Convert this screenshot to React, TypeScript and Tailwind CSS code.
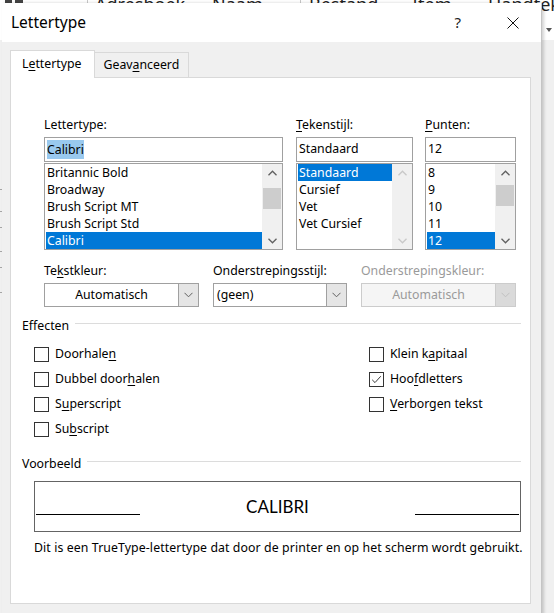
import type { ReactNode } from "react";

const FONTS = ["Britannic Bold", "Broadway", "Brush Script MT", "Brush Script Std", "Calibri"];
const STYLES = ["Standaard", "Cursief", "Vet", "Vet Cursief"];
const SIZES = ["8", "9", "10", "11", "12"];

// label with an underlined access key
function Acc({ text, at }: { text: string; at?: number }) {
  if (at === undefined) return <>{text}</>;
  return (
    <>
      {text.slice(0, at)}
      <span className="underline decoration-1 underline-offset-[2px]">{text[at]}</span>
      {text.slice(at + 1)}
    </>
  );
}

function Chevron({ dir, color, thin }: { dir: "up" | "down"; color: string; thin?: boolean }) {
  return (
    <svg width="9" height="6" viewBox="0 0 9 6" fill="none" stroke={color} strokeWidth={thin ? 1 : 1.3}>
      <polyline points={dir === "up" ? "0.5,5.2 4.5,1.2 8.5,5.2" : "0.5,0.8 4.5,4.8 8.5,0.8"} />
    </svg>
  );
}

function Field({ children }: { children: ReactNode }) {
  return <div className="flex h-[25px] items-center border border-[#a0a0a0] bg-white pl-[2px]">{children}</div>;
}

function ListBox({ items, selected, thumb, disabled }: { items: string[]; selected: number; thumb?: string; disabled?: boolean }) {
  const arrow = disabled ? "#c8c8c8" : "#606060";
  return (
    <div className="mt-px flex h-[87px] border border-[#a0a0a0] bg-white">
      <div className="flex-1 pl-px">
        {items.map((t, i) => (
          <div key={t} className={`h-[17px] pl-px pt-px leading-[16px] ${i === selected ? "bg-[#0078d7] text-white" : ""}`}>
            {t}
          </div>
        ))}
      </div>
      <div className="flex w-[20px] flex-col bg-[#f0f0f0]">
        <div className="grid h-[17px] place-items-center">
          <Chevron dir="up" color={arrow} />
        </div>
        <div className="flex-1">{thumb && <div className={`mx-px h-[21px] bg-[#cdcdcd] ${thumb}`} />}</div>
        <div className="grid h-[17px] place-items-center">
          <Chevron dir="down" color={arrow} />
        </div>
      </div>
    </div>
  );
}

function Combo({ value, width, center, disabled }: { value: string; width: string; center?: boolean; disabled?: boolean }) {
  return (
    <div className={`flex h-[24px] border ${width} ${disabled ? "border-[#cccccc] bg-[#f5f5f5] text-[#9a9a9a]" : "border-[#a0a0a0] bg-white"}`}>
      <div className={`flex flex-1 items-center ${center ? "justify-center" : "pl-[3px]"}`}>{value}</div>
      <div className={`grid w-[20px] place-items-center border-l ${disabled ? "border-[#cccccc] bg-[#dadada]" : "border-[#a0a0a0] bg-[#e5e5e5]"}`}>
        <Chevron dir="down" color={disabled ? "#c0c0c0" : "#606060"} thin />
      </div>
    </div>
  );
}

function Check({ text, at, checked }: { text: string; at: number; checked?: boolean }) {
  return (
    <div className="flex h-[25px] items-center pt-px">
      <div className="grid h-[15px] w-[15px] place-items-center border border-[#333333] bg-white">
        {checked && (
          <svg width="11" height="11" viewBox="0 0 11 11" fill="none" stroke="#3c3c3c" strokeWidth="1">
            <polyline points="1.2,5.8 4,8.6 9.8,2.2" />
          </svg>
        )}
      </div>
      <span className="ml-[6px]">
        <Acc text={text} at={at} />
      </span>
    </div>
  );
}

function Group({ title }: { title: string }) {
  return (
    <div className="flex h-[17px] items-center leading-[17px]">
      <span>{title}</span>
      <div className="ml-[6px] mr-[9px] h-px flex-1 -translate-y-[2px] bg-[#dcdcdc]" />
    </div>
  );
}

// row lines of the sheet peeking out on the left
const ROW_GAPS = ["h-[150px]", "h-[22px]", "h-[16px]", "h-[24px]", "h-[16px]", "h-[25px]"];

export default function App() {
  return (
    <div className="relative h-[613px] w-[554px] overflow-hidden bg-[#f0f0f0] font-['Noto_Sans',sans-serif] text-[12.3px] text-black">
      {/* spreadsheet behind the dialog */}
      <div className="flex h-[40px] items-start overflow-hidden bg-white text-[18px] leading-none text-[#222]">
        <div className="ml-[5px] h-[4px] w-[7px] shrink-0 bg-[#444]" />
        <div className="ml-[3px] h-[4px] w-[8px] shrink-0 bg-[#444]" />
        <div className="ml-[64px] h-[40px] w-px shrink-0 bg-[#c8c8c8]" />
        <span className="-mt-[5px] ml-[7px] w-[117px] shrink-0">Adresboek</span>
        <span className="-mt-[5px] w-[88px] shrink-0">Naam</span>
        <div className="h-[40px] w-px shrink-0 bg-[#c8c8c8]" />
        <span className="-mt-[5px] ml-[8px] w-[103px] shrink-0">Bestand</span>
        <span className="-mt-[5px] w-[76px] shrink-0">Item</span>
        <span className="-mt-[5px] w-[58px] shrink-0 whitespace-nowrap">Handtekening</span>
        <div className="ml-auto mr-[2px] mt-[28px] h-0 w-0 shrink-0 border-x-[3px] border-t-[4px] border-x-transparent border-t-[#555]" />
      </div>
      <div className="flex w-[3px] flex-col">
        {ROW_GAPS.map((h, i) => (
          <div key={i} className={`${h} border-b border-[#a6a6a6]`} />
        ))}
      </div>

      {/* Lettertype dialog */}
      <div className="absolute left-[2px] top-[3px] h-[612px] w-[540px] border-r border-[#c4c4c4] bg-[#f0f0f0] shadow-[2px_0_3px_rgba(0,0,0,0.18)]">
        <div className="flex h-[39px] items-center bg-white pl-[9px] pr-[22px]">
          <span className="flex-1 text-[15.5px]">Lettertype</span>
          <span className="text-[15px] text-[#222]">?</span>
          <svg className="ml-[46px]" width="12" height="12" viewBox="0 0 12 12" stroke="#111" strokeWidth="1">
            <line x1="0.5" y1="0.5" x2="11.5" y2="11.5" />
            <line x1="11.5" y1="0.5" x2="0.5" y2="11.5" />
          </svg>
        </div>

        {/* tabs */}
        <div className="mt-[8px] flex items-end pl-[8px]">
          <div className="relative z-10 -mb-px flex h-[28px] items-center border border-b-0 border-[#d9d9d9] bg-white pl-[11px] pr-[12px]">
            <Acc text="Lettertype" at={1} />
          </div>
          <div className="flex h-[25px] items-center border border-b-0 border-l-0 border-[#d9d9d9] pl-[9px] pr-[9px]">
            <Acc text="Geavanceerd" at={4} />
          </div>
        </div>

        <div className="ml-[8px] mr-[10px] h-[527px] border border-[#d9d9d9] bg-white pl-[11px] pt-[38px]">
          <div className="ml-[22px] flex gap-[13px]">
            <div className="w-[239px]">
              <div className="h-[17px] leading-[17px]">Lettertype:</div>
              <div className="mt-[4px]">
                <Field>
                  <span className="bg-[#99c9ef] leading-[19px]">Calibri</span>
                </Field>
              </div>
              <ListBox items={FONTS} selected={4} thumb="mt-[7px]" />
            </div>
            <div className="w-[117px]">
              <div className="h-[17px] leading-[17px]">
                <Acc text="Tekenstijl:" at={0} />
              </div>
              <div className="mt-[4px]">
                <Field>Standaard</Field>
              </div>
              <ListBox items={STYLES} selected={0} disabled />
            </div>
            <div className="-ml-px w-[91px]">
              <div className="h-[17px] leading-[17px]">
                <Acc text="Punten:" at={0} />
              </div>
              <div className="mt-[4px]">
                <Field>12</Field>
              </div>
              <ListBox items={SIZES} selected={4} thumb="mt-[4px]" />
            </div>
          </div>

          <div className="ml-[22px] mt-[12px] flex gap-[14px]">
            <div>
              <div className="h-[17px] leading-[17px]">
                <Acc text="Tekstkleur:" at={2} />
              </div>
              <div className="mt-[4px]">
                <Combo value="Automatisch" width="w-[155px]" center />
              </div>
            </div>
            <div>
              <div className="h-[17px] leading-[17px]">Onderstrepingsstijl:</div>
              <div className="mt-[4px]">
                <Combo value="(geen)" width="w-[134px]" />
              </div>
            </div>
            <div>
              <div className="h-[17px] leading-[17px] text-[#9a9a9a]">Onderstrepingskleur:</div>
              <div className="mt-[4px]">
                <Combo value="Automatisch" width="w-[155px]" center disabled />
              </div>
            </div>
          </div>

          <div className="mt-[10px]">
            <Group title="Effecten" />
          </div>
          <div className="ml-[12px] mt-[7px] flex">
            <div className="w-[335px]">
              <Check text="Doorhalen" at={8} />
              <Check text="Dubbel doorhalen" at={11} />
              <Check text="Superscript" at={1} />
              <Check text="Subscript" at={2} />
            </div>
            <div>
              <Check text="Klein kapitaal" at={7} />
              <Check text="Hoofdletters" at={3} checked />
              <Check text="Verborgen tekst" at={0} />
            </div>
          </div>

          <div className="mt-[14px]">
            <Group title="Voorbeeld" />
          </div>
          <div className="ml-[12px] mr-[9px] mt-[9px] flex h-[51px] items-start border border-[#646464] px-px">
            <div className="mt-[32px] h-px w-[104px] bg-black" />
            <div className="mt-[15px] flex-1 text-center font-['Lato',sans-serif] text-[17px] leading-[20px]">CALIBRI</div>
            <div className="mt-[32px] h-px w-[104px] bg-black" />
          </div>
          <div className="ml-[12px] mt-[7px] whitespace-nowrap leading-[17px] tracking-[0.1px]">
            Dit is een TrueType-lettertype dat door de printer en op het scherm wordt gebruikt.
          </div>
        </div>
      </div>
    </div>
  );
}
